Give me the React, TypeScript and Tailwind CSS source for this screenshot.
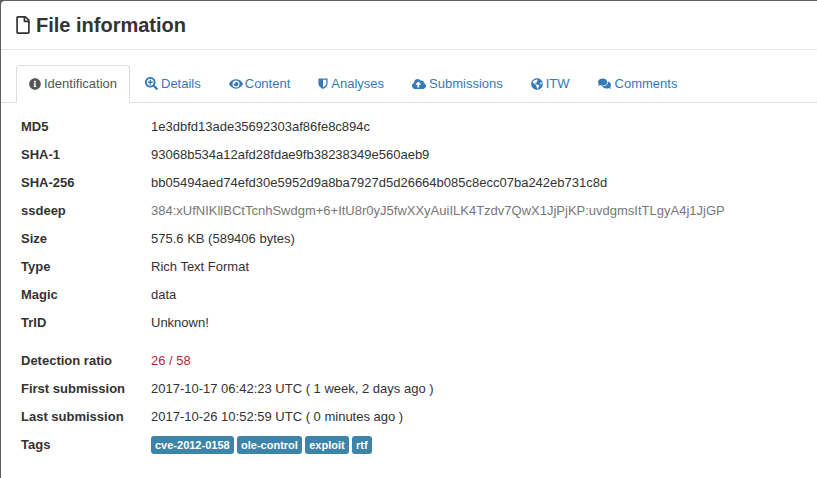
import type { ReactNode } from "react";
import { FaRegFile, FaInfoCircle, FaSearchPlus, FaEye, FaCloudUploadAlt, FaGlobeAmericas, FaComments } from "react-icons/fa";

function HalfShield() {
  return (
    <svg viewBox="0 0 24 28" className="h-[13px] w-[10px]" fill="currentColor">
      <path fillRule="evenodd" d="M1 2h22v12c0 6-5 10-11 13C6 24 1 20 1 14V2zm11 3v18c4-2.500 8-5 8-9V5h-8z" />
    </svg>
  );
}

const tabs = [
  { label: "Details", icon: <FaSearchPlus className="text-[13px]" />, gap: "gap-[3px]" },
  { label: "Content", icon: <FaEye className="text-[14px]" />, gap: "gap-[2px]" },
  { label: "Analyses", icon: <HalfShield />, gap: "gap-[3px]" },
  { label: "Submissions", icon: <FaCloudUploadAlt className="text-[14px]" />, gap: "gap-[3px]" },
  { label: "ITW", icon: <FaGlobeAmericas className="text-[12px]" />, gap: "gap-[3px]" },
  { label: "Comments", icon: <FaComments className="text-[13px]" />, gap: "gap-[4px]" },
];

const rows1: [string, string, string?][] = [
  ["MD5", "1e3dbfd13ade35692303af86fe8c894c"],
  ["SHA-1", "93068b534a12afd28fdae9fb38238349e560aeb9"],
  ["SHA-256", "bb05494aed74efd30e5952d9a8ba7927d5d26664b085c8ecc07ba242eb731c8d"],
  ["ssdeep", "384:xUfNIKllBCtTcnhSwdgm+6+ItU8r0yJ5fwXXyAuiILK4Tzdv7QwX1JjPjKP:uvdgmsItTLgyA4j1JjGP", "text-[#777777]"],
  ["Size", "575.6 KB (589406 bytes)"],
  ["Type", "Rich Text Format"],
  ["Magic", "data"],
  ["TrID", "Unknown!"],
];

const rows2: [string, string, string?][] = [
  ["Detection ratio", "26 / 58", "text-[#b02a37]"],
  ["First submission", "2017-10-17 06:42:23 UTC ( 1 week, 2 days ago )"],
  ["Last submission", "2017-10-26 10:52:59 UTC ( 0 minutes ago )"],
];

const tags = ["cve-2012-0158", "ole-control", "exploit", "rtf"];

function Row({ label, children }: { label: string; children: ReactNode }) {
  return (
    <div className="flex h-[28px] items-center">
      <div className="w-[130px] shrink-0 font-bold text-[#333333]">{label}</div>
      <div className="flex-1 whitespace-nowrap">{children}</div>
    </div>
  );
}

export default function App() {
  return (
    <div className="h-[478px] w-[817px] overflow-hidden bg-[#5f5f5f] pl-px pt-px font-['Liberation_Sans',Arial,sans-serif] text-[13px] text-[#333333]">
      <div className="h-full rounded-tl-[4px] bg-white">
        <div className="flex h-[49px] items-center gap-[6px] border-b border-[#e7e7e7] pl-[15px]">
          <FaRegFile className="h-[18px] w-[14px] text-[#333333]" />
          <h1 className="text-[20px] font-bold">File information</h1>
        </div>
        <div className="mt-[15px] flex h-[38px] border-b border-[#dddddd] pl-[15px]">
          <div className="-mb-px flex h-[38px] w-[114px] items-center justify-center gap-[3px] rounded-t-[4px] border border-[#dddddd] border-b-white bg-white text-[#555555]">
            <FaInfoCircle className="text-[12px]" />
            <span>Identification</span>
          </div>
          {tabs.map(({ label, icon, gap }) => (
            <div key={label} className={`flex items-center pl-[15px] pr-[13px] text-[#337ab7] ${gap}`}>
              {icon}
              <span>{label}</span>
            </div>
          ))}
        </div>
        <div className="pl-[20px] pt-[10px]">
          {rows1.map(([l, v, c]) => (
            <Row key={l} label={l}><span className={c}>{v}</span></Row>
          ))}
          <div className="h-[10px]" />
          {rows2.map(([l, v, c]) => (
            <Row key={l} label={l}><span className={c}>{v}</span></Row>
          ))}
          <Row label="Tags">
            <div className="flex gap-[3.4px]">
              {tags.map((t) => (
                <span key={t} className="flex h-[18px] items-center rounded-[3px] bg-[#3d85a8] px-[4px] text-[11px] font-bold text-white">{t}</span>
              ))}
            </div>
          </Row>
        </div>
      </div>
    </div>
  );
}
